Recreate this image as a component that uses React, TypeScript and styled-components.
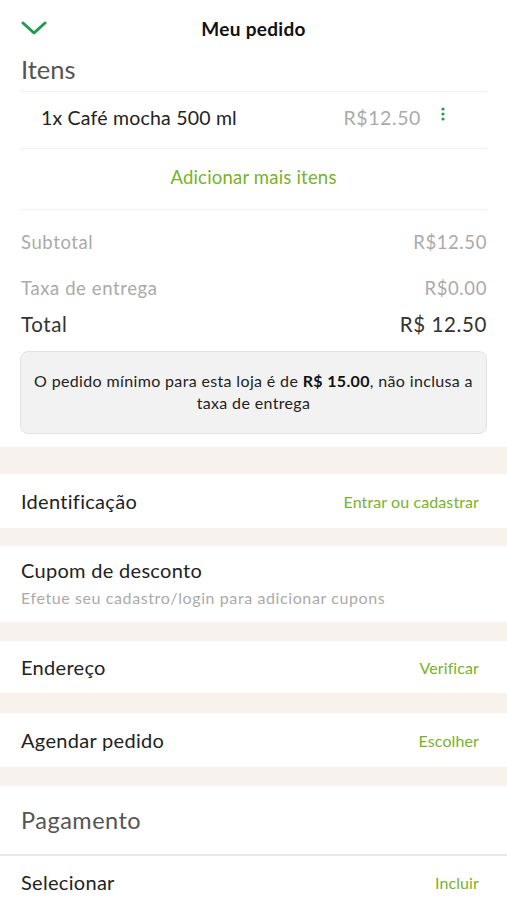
import styled, { createGlobalStyle } from "styled-components";

const GlobalStyle = createGlobalStyle`
  body {
    margin: 0;
    background: #fff;
    font-family: Lato, "Noto Sans", "Liberation Sans", sans-serif;
    color: #222;
  }
`;

const Page = styled.div`
  width: 507px;
  height: 900px;
  overflow: hidden;
  background: #fff;
`;

const Header = styled.header`
  height: 52px;
  display: grid;
  grid-template-columns: 60px 1fr 60px;
  align-items: center;
  padding: 4px 0 0 21px;
  box-sizing: border-box;
`;

const BackButton = styled.button`
  border: none;
  background: none;
  padding: 0;
  width: 28px;
  height: 20px;
  display: flex;
  align-items: center;
`;

const HeaderTitle = styled.h1`
  margin: 0 21px 0 0;
  text-align: center;
  font-size: 19px;
  letter-spacing: 0.3px;
  font-weight: 700;
  color: #111;
`;

const Card = styled.section`
  padding: 0 20px;
`;

const SectionTitle = styled.h2`
  margin: 0;
  height: 39px;
  line-height: 35px;
  font-size: 25.5px;
  font-weight: 400;
  color: #555;
  padding-left: 1px;
  border-bottom: 1px solid #f0f0f0;
`;

const ItemRow = styled.div`
  height: 57px;
  box-sizing: border-box;
  padding: 0 0 5px 21px;
  display: flex;
  align-items: center;
  border-bottom: 1px solid #f0f0f0;
`;

const ItemName = styled.span`
  flex: 1;
  font-size: 19.5px;
  letter-spacing: 0.2px;
  color: #222;
`;

const ItemPrice = styled.span`
  font-size: 19.5px;
  letter-spacing: 0.6px;
  color: #aaa;
`;

const Kebab = styled.button`
  border: none;
  background: none;
  padding: 0;
  width: 20px;
  margin: 0 34px 0 12px;
  height: 22px;
  display: flex;
  align-items: flex-start;
  justify-content: center;
`;

const AddMore = styled.div`
  height: 61px;
  box-sizing: border-box;
  padding-bottom: 5px;
  display: flex;
  align-items: center;
  justify-content: center;
  font-size: 18.5px;
  letter-spacing: 0.2px;
  color: #78b22a;
  border-bottom: 1px solid #f0f0f0;
`;

const Totals = styled.div`
  display: flex;
  flex-direction: column;
  padding-top: 10px;
`;

const TotalRow = styled.div<{ $h: number; $strong?: boolean }>`
  height: ${(p) => p.$h}px;
  display: flex;
  align-items: center;
  justify-content: space-between;
  padding-left: 1px;
  font-size: ${(p) => (p.$strong ? 20.5 : 18.5)}px;
  letter-spacing: 0.6px;
  color: ${(p) => (p.$strong ? "#333" : "#aaa")};
`;

const Notice = styled.div`
  margin-top: 15px;
  padding: 18px 6px 19px;
  background: #f2f2f2;
  border: 1px solid #e2e2e2;
  border-radius: 8px;
  text-align: center;
  font-size: 16px;
  letter-spacing: 0.35px;
  line-height: 22px;
  color: #222;

  b {
    font-weight: 700;
    color: #111;
  }
`;

const Spacer = styled.div<{ $h: number }>`
  height: ${(p) => p.$h}px;
  background: #fff;
`;

const Band = styled.div<{ $h: number }>`
  height: ${(p) => p.$h}px;
  background: #f8f2ed;
`;

const OptionRow = styled.div<{ $h: number }>`
  height: ${(p) => p.$h}px;
  display: flex;
  align-items: center;
  justify-content: space-between;
  padding: 0 28px 0 21px;
`;

const OptionLabel = styled.span`
  font-size: 20px;
  letter-spacing: 0.3px;
  color: #222;
`;

const OptionAction = styled.span`
  font-size: 16px;
  letter-spacing: 0.1px;
  color: #78b22a;
`;

const CouponBlock = styled.div`
  height: 76px;
  box-sizing: border-box;
  padding: 12px 21px 0;
  display: flex;
  flex-direction: column;
  gap: 4px;
`;

const CouponTitle = styled.span`
  font-size: 20px;
  letter-spacing: 0.3px;
  line-height: 25px;
  color: #222;
`;

const CouponHint = styled.span`
  font-size: 16px;
  letter-spacing: 0.6px;
  line-height: 22px;
  color: #aaa;
`;

const PaymentTitle = styled.h2`
  margin: 0;
  height: 70px;
  line-height: 68px;
  font-size: 23.5px;
  letter-spacing: 0.5px;
  font-weight: 400;
  color: #555;
  padding-left: 21px;
  border-bottom: 2px solid #e8e8e8;
  box-sizing: border-box;
`;

const Chevron = () => (
  <svg width="26" height="16" viewBox="0 0 26 16" fill="none">
    <path d="M2 3l11 10L24 3" stroke="#1f9b4f" strokeWidth="3" strokeLinecap="round" strokeLinejoin="round" />
  </svg>
);

const Dots = () => (
  <svg width="4" height="14" viewBox="0 0 4 14">
    <circle cx="2" cy="2" r="1.6" fill="#2a9a4a" />
    <circle cx="2" cy="7" r="1.6" fill="#2a9a4a" />
    <circle cx="2" cy="12" r="1.6" fill="#2a9a4a" />
  </svg>
);

const App = (): JSX.Element => {
  return (
    <Page>
      <GlobalStyle />
      <Header>
        <BackButton>
          <Chevron />
        </BackButton>
        <HeaderTitle>Meu pedido</HeaderTitle>
        <span />
      </Header>
      <Card>
        <SectionTitle>Itens</SectionTitle>
        <ItemRow>
          <ItemName>1x Café mocha 500 ml</ItemName>
          <ItemPrice>R$12.50</ItemPrice>
          <Kebab>
            <Dots />
          </Kebab>
        </ItemRow>
        <AddMore>Adicionar mais itens</AddMore>
        <Totals>
          <TotalRow $h={44}>
            <span>Subtotal</span>
            <span>R$12.50</span>
          </TotalRow>
          <TotalRow $h={48}>
            <span>Taxa de entrega</span>
            <span>R$0.00</span>
          </TotalRow>
          <TotalRow $h={24} $strong>
            <span>Total</span>
            <span>R$ 12.50</span>
          </TotalRow>
        </Totals>
        <Notice>
          O pedido mínimo para esta loja é de <b>R$ 15.00</b>, não inclusa a taxa de entrega
        </Notice>
      </Card>
      <Spacer $h={13} />
      <Band $h={27} />
      <OptionRow $h={54}>
        <OptionLabel>Identificação</OptionLabel>
        <OptionAction>Entrar ou cadastrar</OptionAction>
      </OptionRow>
      <Band $h={18} />
      <CouponBlock>
        <CouponTitle>Cupom de desconto</CouponTitle>
        <CouponHint>Efetue seu cadastro/login para adicionar cupons</CouponHint>
      </CouponBlock>
      <Band $h={19} />
      <OptionRow $h={52}>
        <OptionLabel>Endereço</OptionLabel>
        <OptionAction>Verificar</OptionAction>
      </OptionRow>
      <Band $h={20} />
      <OptionRow $h={54}>
        <OptionLabel>Agendar pedido</OptionLabel>
        <OptionAction>Escolher</OptionAction>
      </OptionRow>
      <Band $h={19} />
      <PaymentTitle>Pagamento</PaymentTitle>
      <OptionRow $h={52}>
        <OptionLabel>Selecionar</OptionLabel>
        <OptionAction>Incluir</OptionAction>
      </OptionRow>
    </Page>
  );
};

export default App;
